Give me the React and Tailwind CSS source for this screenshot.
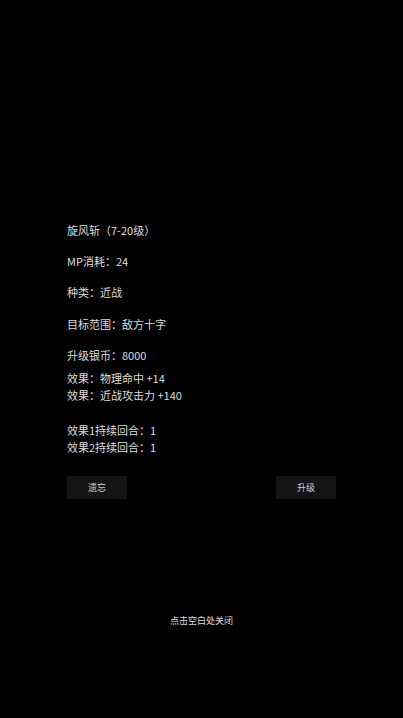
export default function App() {
  const font = { fontFamily: '"Noto Sans CJK SC", "Noto Sans", sans-serif' };
  return (
    <div className="w-[403px] h-[718px] bg-black text-[#dcdcdc] overflow-hidden" style={font}>
      <div className="flex flex-col px-[67px] pt-[222px]">
        <div className="text-[11px] leading-[16px] h-[16px] mb-[15px]">旋风斩（7-20级）</div>
        <div className="text-[11px] leading-[16px] h-[16px] mb-[15px]">MP消耗：24</div>
        <div className="text-[11px] leading-[16px] h-[16px] mb-[16px]">种类：近战</div>
        <div className="text-[11px] leading-[16px] h-[16px] mb-[15px]">目标范围：敌方十字</div>
        <div className="text-[11px] leading-[16px] h-[16px] mb-[7px]">升级银币：8000</div>
        <div className="text-[11px] leading-[16px] h-[16px] mb-[1px]">效果：物理命中 +14</div>
        <div className="text-[11px] leading-[16px] h-[16px] mb-[19px]">效果：近战攻击力 +140</div>
        <div className="text-[11px] leading-[16px] h-[16px] mb-[1px]">效果1持续回合：1</div>
        <div className="text-[11px] leading-[16px] h-[16px] mb-[21px]">效果2持续回合：1</div>
        <div className="flex justify-between">
          <div className="w-[60px] h-[23px] bg-[#141414] flex items-center justify-center text-[9px] text-[#cfcfcf]">遗忘</div>
          <div className="w-[60px] h-[23px] bg-[#141414] flex items-center justify-center text-[9px] text-[#cfcfcf]">升级</div>
        </div>
      </div>
      <div className="mt-[116px] text-center text-[9px] leading-[12px] text-[#dcdcdc]">点击空白处关闭</div>
    </div>
  );
}
